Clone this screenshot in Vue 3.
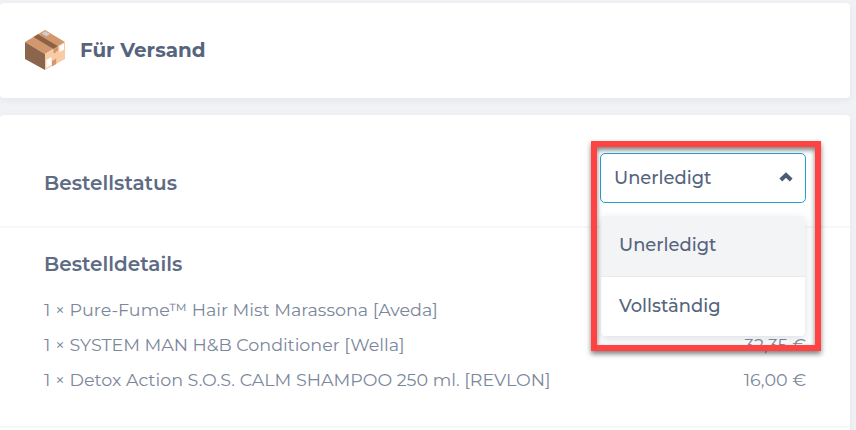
<template>
  <main class="page">
    <section class="card card--head">
      <svg class="box" viewBox="0 0 42 42" aria-hidden="true">
        <path fill="#d3976e" d="M21 1 41 13 21 25 1 13z" />
        <path fill="#8c664c" d="M1 13 21 25v16L1 30z" />
        <path fill="#f9cba4" d="M21 25 41 13v17L21 41z" />
        <path fill="#8b6245" d="M9.5 8 14 5.3 34 17.2 29.5 20z" />
        <path fill="#d3976e" d="M29.5 20 34 17.2v5.3l-1.5-.6-1.5 2.6-1.5-.5z" />
        <path fill="#d3976e" d="M28 32l4.2-2.5v5.5L28 37.5z" />
        <path fill="#d0cfce" d="M21 2.3 26 5 22.5 7.2 17.6 4.4z" />
        <path fill="#fff" d="M22.3 31 27.5 28v8l-5.2 3zM35.5 17l4.5-2.6v6.2l-4.5 2.5z" />
      </svg>
      <h1 class="title">Für Versand</h1>
    </section>

    <section class="card card--order">
      <div class="status">
        <h2 class="heading heading--status">Bestellstatus</h2>
        <div class="select">
          <button class="select__button" @click="open = !open">
            <span>{{ selected }}</span>
            <svg :class="['arrow', { 'arrow--down': !open }]" viewBox="0 0 14 10">
              <path d="M1.8 8 7 3 12.2 8" />
            </svg>
          </button>
          <ul v-if="open" class="menu">
            <li
              v-for="option in options"
              :key="option"
              :class="['menu__item', { active: option === selected }]"
              @click="choose(option)"
            >
              {{ option }}
            </li>
          </ul>
          <div class="frame"></div>
        </div>
      </div>

      <div class="details">
        <h2 class="heading">Bestelldetails</h2>
        <div
          v-for="item in items"
          :key="item.name"
          class="row"
        >
          <span>1 × {{ item.name }}</span>
          <span>{{ item.price }}</span>
        </div>
      </div>
    </section>
  </main>
</template>

<script setup>
  import {ref} from 'vue';

  const options = ['Unerledigt', 'Vollständig'];
  const selected = ref('Unerledigt');
  const open = ref(true);

  const items = [
    {name: 'Pure-Fume™ Hair Mist Marassona [Aveda]', price: ''},
    {name: 'SYSTEM MAN H&B Conditioner [Wella]', price: '32,35 €'},
    {name: 'Detox Action S.O.S. CALM SHAMPOO 250 ml. [REVLON]', price: '16,00 €'},
  ];

  const choose = (option) => {
    selected.value = option;
    open.value = false;
  };
</script>

<style>
  body {
    background-color: #f1f2f5;
    overflow: hidden;
  }
</style>

<style scoped>
  .page {
    box-sizing: border-box;
    height: 430px;
    padding: 3px 6px 0 0;
    overflow: hidden;
    background-color: #f1f2f5;
    color: #56647d;
    font-family: Montserrat, Inter, sans-serif;
  }

  .card {
    background-color: #fff;
    box-shadow: 0 2px 7px rgba(60, 75, 100, 0.07);
  }

  .card--head {
    display: flex;
    align-items: center;
    box-sizing: border-box;
    height: 95px;
    padding: 0 0 2px 24px;
    border-radius: 4px;
  }

  .box {
    width: 42px;
    height: 42px;
  }

  .title {
    margin: 0 0 0 14px;
    font-size: 19.9px;
    font-weight: 700;
    line-height: 24px;
  }

  .card--order {
    height: 330px;
    margin-top: 17px;
    border-radius: 4px 4px 0 0;
  }

  .status {
    display: flex;
    justify-content: space-between;
    box-sizing: border-box;
    height: 113px;
    padding: 38px 44px 0;
    border-bottom: 2px solid #f7f7f8;
  }

  .heading {
    margin: 0;
    color: #5d6b83;
    font-size: 20px;
    font-weight: 600;
    line-height: 24px;
  }

  .heading--status {
    padding-top: 18px;
  }

  .select {
    position: relative;
    width: 206px;
    height: 50px;
    font-size: 17.9px;
    font-weight: 500;
  }

  .select__button {
    display: flex;
    align-items: center;
    justify-content: space-between;
    box-sizing: border-box;
    width: 100%;
    height: 100%;
    padding: 0 12px 2px 13px;
    border: 1.5px solid #1ea5d1;
    border-radius: 5px;
    background-color: #fff;
    color: inherit;
    font: inherit;
    cursor: pointer;
  }

  .arrow {
    width: 14px;
    height: 10px;
    fill: none;
    stroke: #4c5c77;
    stroke-width: 4;
  }

  .arrow--down {
    transform: rotate(180deg);
  }

  .menu {
    position: absolute;
    top: 63px;
    left: 1px;
    z-index: 1;
    width: 204px;
    margin: 0;
    padding: 0;
    border-radius: 4px;
    background-color: #fff;
    box-shadow: 0 3px 10px rgba(60, 75, 100, 0.18);
    list-style: none;
    overflow: hidden;
  }

  .menu__item {
    box-sizing: border-box;
    height: 59px;
    padding-left: 18px;
    line-height: 57px;
    cursor: pointer;

    &.active {
      height: 61px;
      border-bottom: 1px solid #e8ebee;
      background-color: #f3f4f6;
      line-height: 58px;
    }
  }

  /* highlight around the opened select */
  .frame {
    position: absolute;
    top: -12px;
    left: -9px;
    z-index: 2;
    box-sizing: border-box;
    width: 230px;
    height: 210px;
    border: 6px solid #ff4343;
    box-shadow: 0 3px 5px rgba(0, 0, 0, 0.5), inset 0 3px 5px rgba(0, 0, 0, 0.5);
    pointer-events: none;
  }

  .details {
    box-sizing: border-box;
    height: 200px;
    padding: 24px 44px 0;
    border-bottom: 2px solid #f7f7f8;
  }

  .row {
    display: flex;
    justify-content: space-between;
    height: 35px;
    color: #7b879b;
    font-size: 17.5px;
    font-weight: 400;
    line-height: 35px;
    white-space: nowrap;
  }

  .heading + .row {
    margin-top: 16px;
  }
</style>
